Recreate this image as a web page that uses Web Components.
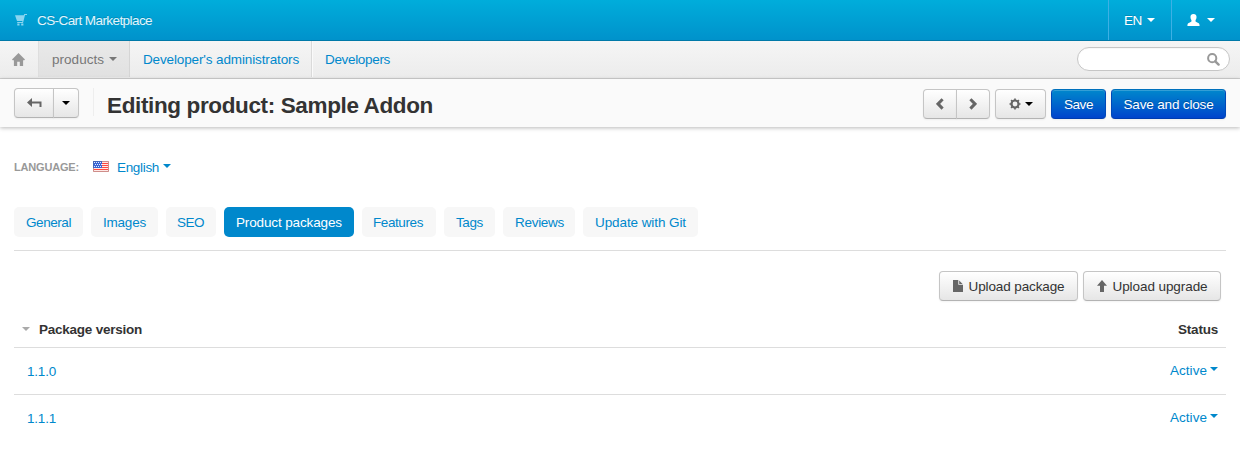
<!DOCTYPE html>
<html lang="en"><head><meta charset="utf-8"><title>Editing product: Sample Addon</title>
<style>
html,body{margin:0;background:#fff}
body{font:13.5px/20px "Liberation Sans",Arial,sans-serif;color:#333;height:449px;overflow:hidden}
</style></head><body>
<product-page></product-page>
<script>
const define=(name,html,init)=>customElements.define(name,class extends HTMLElement{
  constructor(){super();const t=document.createElement('template');t.innerHTML=html;
    this.attachShadow({mode:'open'}).append(t.content.cloneNode(true));}
  connectedCallback(){if(init)init.call(this,this.shadowRoot);}
});

/* Text run that tracks its letters to an exact advance width. */
define('fit-text','<style>:host{display:inline-block;white-space:nowrap;flex:none;padding-top:2px}:host([flat]){padding-top:0}</style><slot></slot>',function(){
  const w=+this.getAttribute('w'),n=this.textContent.length;
  this.style.letterSpacing='0px';
  const natural=this.getBoundingClientRect().width;
  this.style.letterSpacing=((w-natural)/n)+'px';
  this.style.width=w+'px';
});

define('drop-caret','<style>:host{display:block;flex:none;width:0;height:0;border:4px solid transparent;border-top-color:currentColor;border-bottom:0}</style>');

const icons={
cart:[12,12,'<path d="M0 1.200h8.800L9.300 0H12v1h-2L8 9H2.200V8h5l.3-.9H2z"/><path d="M2.300 9.500h2.200v2H2.300zM6.200 9.500h2.200v2H6.200z"/>'],
home:[13,13,'<path d="M6.5 0 13 6.6l-.7.6h-1.2V13H7.8V8.8H5.2V13H1.9V7.2H.7L0 6.6z"/>'],
user:[13,12,'<path d="M6.500 0C8.800 0 9.700 1.300 9.500 3.600 9.400 5 8.700 5.700 8.500 6.600c-.1 1 .4 1.500 1.700 1.900 1.700.6 2.400 1 2.400 3.500H.4c0-2.500.7-2.900 2.400-3.500 1.300-.4 1.800-.9 1.700-1.900-.2-.9-.9-1.600-1-3C3.300 1.300 4.200 0 6.500 0z"/>'],
search:[13,13,'<circle cx="5.200" cy="5.200" r="4.100" fill="none" stroke="currentColor" stroke-width="2"/><path d="m8.300 8.300 3.300 3.300" stroke="currentColor" stroke-width="2.400" stroke-linecap="round"/>'],
back:[15,10,'<path d="M5 0v3.500h9.500V9h-2V5.400H5v3.500L0 4.450z"/>'],
left:[8,12,'<path d="m6.600 1.200-4.600 4.700 4.600 4.700" fill="none" stroke="currentColor" stroke-width="3"/>'],
right:[8,12,'<path d="m1.400 1.200 4.600 4.700-4.600 4.700" fill="none" stroke="currentColor" stroke-width="3"/>'],
gear:[12,12,'<circle cx="6" cy="6" r="3.500" fill="none" stroke="currentColor" stroke-width="2.200"/><path d="M6 .5v2M6 9.500v2M.5 6h2M9.500 6h2M2.100 2.100l1.300 1.300M8.600 8.600l1.300 1.300M2.100 9.900l1.300-1.300M8.600 3.400l1.300-1.300" stroke="currentColor" stroke-width="1.700"/>'],
file:[10,12,'<path d="M0 0h5.300v4.700H10V12H0zM6.200.6l3.400 3.300H6.200z"/>'],
up:[10,12,'<path d="M5 0 10 5.700H7V12H3V5.700H0z"/>'],
flag:[16,11,'<rect width="16" height="11" fill="#fff"/><path d="M1 1.500h14M1 3.500h14M1 5.500h14M1 7.500h14M1 9.500h14" stroke="#ffe9e7"/><path d="M1 2.500h14M1 4.500h14M1 6.500h14M1 8.500h14" stroke="#ff4a42"/><rect width="9" height="7" fill="#3b66d4"/><path d="M1 1.500h8M2 3.500h7M1 5.500h8" stroke="#e4ebff" stroke-dasharray="1 1"/><path d="M.5.500h15v10H.5z" fill="none" stroke="#b5524b" stroke-opacity=".65"/><path d="M.5 7V.5H9" fill="none" stroke="#4267ba"/>']
};
define('ui-icon','<style>:host{display:block;flex:none}svg{display:block}</style><span></span>',function(r){
  const [w,h,p]=icons[this.getAttribute('name')];
  r.querySelector('span').innerHTML=`<svg width="${w}" height="${h}" viewBox="0 0 ${w} ${h}" fill="currentColor">${p}</svg>`;
});

define('ui-button',`<style>
:host{display:flex;box-sizing:border-box;height:30px;align-items:center;justify-content:center;flex:none;border:1px solid #c5c5c5;border-bottom-color:#b3b3b3;border-radius:4px;background:linear-gradient(#fff,#e6e6e6);color:#333;box-shadow:inset 0 1px 0 rgba(255,255,255,.2),0 1px 2px rgba(0,0,0,.05)}
:host([primary]){color:#fff;background:linear-gradient(#0088cc,#0044cc);border-color:#0071bd #0048b9 #003cae;text-shadow:0 -1px 0 rgba(0,0,0,.25)}
:host([first]){border-radius:4px 0 0 4px}
:host([last]){border-radius:0 4px 4px 0;margin-left:-1px}
ui-icon{color:#666}</style><slot></slot>`);

define('top-bar',`<style>
:host{display:flex;box-sizing:border-box;height:41px;border-bottom:1px solid #0079a8;background:linear-gradient(#00addb,#0092cb);color:#fff;align-items:center;text-shadow:0 -1px 0 rgba(0,0,0,.15)}
.brand{display:flex;align-items:center;flex:1;padding-left:15px;gap:10px;color:#e3f5fc}
.brand ui-icon{color:#8bd5f0}
.cell{display:flex;box-sizing:border-box;height:40px;align-items:center;border-left:1px solid #3eb0e4;padding-left:15px}
</style>
<div class="brand"><ui-icon name="cart"></ui-icon><fit-text w="115">CS-Cart Marketplace</fit-text></div>
<div class="cell" style="width:63px;gap:5px"><fit-text w="18">EN</fit-text><drop-caret></drop-caret></div>
<div class="cell" style="width:69px;gap:7px"><ui-icon name="user"></ui-icon><drop-caret></drop-caret></div>`);

define('nav-bar',`<style>
:host{display:flex;box-sizing:border-box;height:38px;border-bottom:1px solid #d0d0d0;background:linear-gradient(#f5f5f5,#ececec);color:#08c}
div{display:flex;box-sizing:border-box;height:36px;align-items:center}
.home{width:38px;padding-left:12px;color:#999}
.on{width:92px;padding-left:14px;gap:5px;color:#777;background:linear-gradient(#e9e9e9,#e1e1e1);border-right:1px solid #d5d5d5;box-shadow:inset 1px 0 #dedede}
.dev{width:182px;padding-left:13px;border-right:1px solid #dadada;box-shadow:1px 0 #fafafa}
.last{flex:1;padding-left:13px}
.search{width:153px;height:24px;margin:6px 10px 0 0;border:1px solid #c6c6c6;border-radius:12px;background:#fff;justify-content:flex-end;padding-right:9px;color:#999;box-shadow:inset 0 1px 1px #00000008}
</style>
<div class="home"><ui-icon name="home"></ui-icon></div>
<div class="on"><fit-text w="52">products</fit-text><drop-caret></drop-caret></div>
<div class="dev"><fit-text w="156">Developer's administrators</fit-text></div>
<div class="last"><fit-text w="65">Developers</fit-text></div>
<div class="search"><ui-icon name="search"></ui-icon></div>`);

define('title-bar',`<style>
:host{display:flex;height:48px;padding:0 14px;background:#fafafa;align-items:flex-start;box-shadow:0 1px 4px rgba(0,0,0,.28);position:relative}
.g{display:flex;margin-top:9px}
.divider{width:1px;height:28px;margin:9px 13px 0 14px;background:#eee}
h1{margin:5px auto 0 0;font-size:22.5px;line-height:40px;font-weight:700}
drop-caret{color:#000}ui-icon{color:#666}
.actions{display:flex;gap:5px;margin-top:10px}
.actions div{display:flex}
</style>
<div class="g"><ui-button first style="width:40px"><ui-icon name="back"></ui-icon></ui-button><ui-button last style="width:26px"><drop-caret></drop-caret></ui-button></div>
<div class="divider"></div>
<h1><fit-text w="326">Editing product: Sample Addon</fit-text></h1>
<div class="actions"><div><ui-button first style="width:34px"><ui-icon name="left"></ui-icon></ui-button><ui-button last style="width:34px"><ui-icon name="right"></ui-icon></ui-button></div>
<ui-button style="width:51px;gap:4px"><ui-icon name="gear"></ui-icon><drop-caret></drop-caret></ui-button>
<ui-button primary style="width:55px"><fit-text w="29">Save</fit-text></ui-button>
<ui-button primary style="width:115px"><fit-text w="90">Save and close</fit-text></ui-button></div>`);

define('language-picker',`<style>
:host{display:flex;align-items:center;height:20px;color:#08c}
b{font-size:11px;color:#999}
ui-icon{margin:0 8px 1px 14px}drop-caret{margin:-3px 0 0 4px}
</style><b><fit-text flat w="65">LANGUAGE:</fit-text></b><ui-icon name="flag"></ui-icon><fit-text w="42">English</fit-text><drop-caret></drop-caret>`);

define('tab-pill',`<style>:host{display:flex;height:30px;padding:0 12px;align-items:center;background:#f7f7f7;border-radius:5px;color:#08c}
:host([active]){background:#08c;color:#fff}</style><slot></slot>`);

define('package-row',`<style>
:host{display:flex;box-sizing:border-box;height:45px;padding:0 8px 0 13px;align-items:center;justify-content:space-between;color:#08c}
:host([ruled]){height:47px;border-bottom:1px solid #ddd}
div{display:flex;gap:3px}drop-caret{margin-top:6px}
.v{padding-top:2px}
</style><span class="v"><slot></slot></span><div><fit-text flat w="37">Active</fit-text><drop-caret></drop-caret></div>`);

define('product-page',`<style>
:host{display:block}
main{padding:30px 14px 0}
.tabs{display:flex;gap:8px;margin-top:30px;padding-bottom:13px;border-bottom:1px solid #ddd}
.tools{display:flex;justify-content:flex-end;gap:5px;padding:20px 5px 0 0}
.tools ui-button{gap:6px}.tools ui-icon{color:#666}
.head{display:flex;box-sizing:border-box;height:47px;padding:10px 8px 0;border-bottom:1px solid #ddd;font-weight:700;align-items:center}
.head drop-caret{color:#aaa;margin-right:9px}.head fit-text:last-child{margin-left:auto}
</style>
<top-bar></top-bar><nav-bar></nav-bar><title-bar></title-bar>
<main><language-picker></language-picker>
<div class="tabs">
<tab-pill><fit-text w="45">General</fit-text></tab-pill><tab-pill><fit-text w="43">Images</fit-text></tab-pill><tab-pill style="padding:0 12px 0 11px"><fit-text w="27">SEO</fit-text></tab-pill><tab-pill active><fit-text w="106">Product packages</fit-text></tab-pill><tab-pill style="padding:0 13px 0 11px"><fit-text w="50">Features</fit-text></tab-pill><tab-pill><fit-text w="27">Tags</fit-text></tab-pill><tab-pill style="padding-right:11px"><fit-text w="49">Reviews</fit-text></tab-pill><tab-pill><fit-text w="91">Update with Git</fit-text></tab-pill>
</div>
<div class="tools"><ui-button style="width:139px"><ui-icon name="file"></ui-icon><fit-text w="96">Upload package</fit-text></ui-button><ui-button style="width:138px"><ui-icon name="up"></ui-icon><fit-text w="95">Upload upgrade</fit-text></ui-button></div>
<div class="head"><drop-caret></drop-caret><fit-text w="103">Package version</fit-text><fit-text w="40">Status</fit-text></div>
<package-row ruled><fit-text flat w="29">1.1.0</fit-text></package-row>
<package-row><fit-text flat w="29">1.1.1</fit-text></package-row>
</main>`);
</script></body></html>
